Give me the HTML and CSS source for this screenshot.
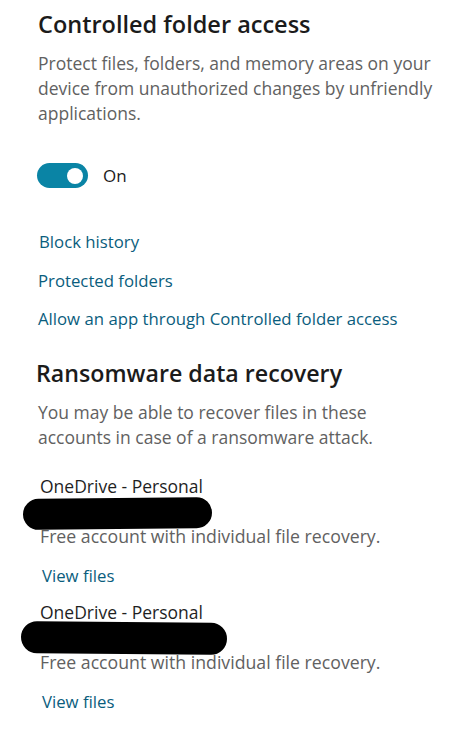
FILE: index.html
```html
<!DOCTYPE html>
<html lang="en">
<head>
<meta charset="utf-8">
<title>Controlled folder access</title>
<link rel="stylesheet" href="styles.css">
</head>
<body>
<main class="page">
  <section class="section cfa">
    <h1 class="heading">Controlled folder access</h1>
    <p class="desc">Protect files, folders, and memory areas on your device from unauthorized changes by unfriendly applications.</p>
    <div class="toggle-row">
      <span class="toggle" role="switch" aria-checked="true"><span class="knob"></span></span>
      <span class="toggle-label">On</span>
    </div>
    <nav class="links">
      <a class="link" href="#">Block history</a>
      <a class="link" href="#">Protected folders</a>
      <a class="link" href="#">Allow an app through Controlled folder access</a>
    </nav>
  </section>

  <section class="section recovery">
    <h2 class="heading heading-2">Ransomware data recovery</h2>
    <p class="desc desc-2">You may be able to recover files in these accounts in case of a ransomware attack.</p>

    <div class="account">
      <div class="account-name">OneDrive - Personal</div>
      <div class="account-email"><span class="redact redact-1"></span></div>
      <div class="account-info">Free account with individual file recovery.</div>
      <a class="link view-link" href="#">View files</a>
    </div>

    <div class="account">
      <div class="account-name">OneDrive - Personal</div>
      <div class="account-email"><span class="redact redact-2"></span></div>
      <div class="account-info">Free account with individual file recovery.</div>
      <a class="link view-link" href="#">View files</a>
    </div>
  </section>
</main>
</body>
</html>
```

FILE: styles.css
```css
* {
  box-sizing: border-box;
}

html, body {
  margin: 0;
  padding: 0;
  background: #ffffff;
}

body {
  font-family: "Open Sans", "Noto Sans", "Liberation Sans", sans-serif;
  font-size: 17.5px;
  line-height: 25px;
  color: #1f1f1f;
}

.page {
  padding: 8px 0 0 38px;
  width: 440px;
}

.section {
  display: flex;
  flex-direction: column;
  align-items: flex-start;
}

.heading {
  margin: 0;
  font-size: 23.5px;
  line-height: 32px;
  font-weight: 600;
  color: #1b1b1b;
}

.heading-2 {
  margin-left: -2px;
  font-size: 23.2px;
}

.desc {
  margin: 11px 0 0 0;
  color: #616161;
  width: 400px;
}

.desc-2 {
  width: 340px;
}

.toggle-row {
  display: flex;
  align-items: center;
  gap: 15px;
  margin-top: 37px;
  margin-left: -1px;
}

.toggle {
  width: 51px;
  height: 25px;
  border-radius: 13px;
  background: #0a84a5;
  display: flex;
  align-items: center;
  justify-content: flex-end;
  padding-right: 5px;
}

.knob {
  width: 16px;
  height: 16px;
  border-radius: 50%;
  background: #ffffff;
}

.toggle-label {
  color: #1b1b1b;
  font-size: 17px;
}

.links {
  display: flex;
  flex-direction: column;
  align-items: flex-start;
  gap: 13.5px;
  margin-top: 41px;
}

.link {
  color: #0a5d7d;
  text-decoration: none;
  font-size: 16.75px;
}

.links .link:first-child {
  margin-left: 1px;
}

.recovery {
  margin-top: 26px;
}

.account {
  display: flex;
  flex-direction: column;
  align-items: flex-start;
  margin-left: 2px;
}

.recovery .desc-2 + .account {
  margin-top: 24px;
}

.account + .account {
  margin-top: 12px;
}

.account-name {
  color: #1f1f1f;
}

.account-email {
  position: relative;
  height: 25px;
  width: 100%;
}

.redact {
  position: absolute;
  background: #000000;
  border-radius: 16px;
}

.redact-1 {
  left: -17px;
  top: -1px;
  width: 189px;
  height: 31px;
  transform: rotate(-0.6deg);
}

.redact-2 {
  left: -19px;
  top: -3px;
  width: 206px;
  height: 32px;
  transform: rotate(0.5deg);
}

.account-info {
  color: #616161;
  font-size: 17.7px;
}

.view-link {
  margin-top: 14px;
  margin-left: 2px;
}
```
